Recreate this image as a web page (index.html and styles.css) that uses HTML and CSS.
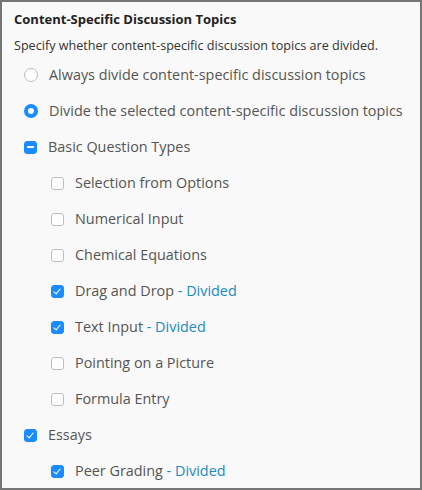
FILE: index.html
```html
<!DOCTYPE html>
<html>
<head>
<meta charset="utf-8">
<link rel="stylesheet" href="styles.css">
</head>
<body>
<div class="panel">
  <h3 class="title">Content-Specific Discussion Topics</h3>
  <p class="desc">Specify whether content-specific discussion topics are divided.</p>
  <ul class="list">
    <li class="row"><span class="radio"></span><span class="label">Always divide content-specific discussion topics</span></li>
    <li class="row"><span class="radio on"></span><span class="label">Divide the selected content-specific discussion topics</span></li>
    <li class="row"><span class="box mixed"></span><span class="label">Basic Question Types</span></li>
    <li class="row sub"><span class="box"></span><span class="label">Selection from Options</span></li>
    <li class="row sub"><span class="box"></span><span class="label">Numerical Input</span></li>
    <li class="row sub"><span class="box"></span><span class="label">Chemical Equations</span></li>
    <li class="row sub"><span class="box checked"></span><span class="label">Drag and Drop <span class="div">- Divided</span></span></li>
    <li class="row sub"><span class="box checked"></span><span class="label">Text Input <span class="div">- Divided</span></span></li>
    <li class="row sub"><span class="box"></span><span class="label">Pointing on a Picture</span></li>
    <li class="row sub"><span class="box"></span><span class="label">Formula Entry</span></li>
    <li class="row"><span class="box checked"></span><span class="label">Essays</span></li>
    <li class="row sub"><span class="box checked"></span><span class="label">Peer Grading <span class="div">- Divided</span></span></li>
  </ul>
</div>
</body>
</html>
```
FILE: styles.css
```css
html, body {
  margin: 0;
  padding: 0;
}
body {
  width: 422px;
  height: 490px;
  overflow: hidden;
  font-family: "Open Sans", "Noto Sans", sans-serif;
}
.panel {
  box-sizing: border-box;
  width: 422px;
  height: 490px;
  border: 2px solid #767676;
  background: #f9f9f9;
  padding: 8px 12px 0 12px;
  overflow: hidden;
}
.title {
  margin: 0;
  font-size: 13px;
  font-weight: 700;
  color: #222;
  line-height: 18px;
}
.desc {
  margin: 9px 0 0 0;
  font-size: 12.6px;
  color: #333;
  line-height: 18px;
  white-space: nowrap;
}
.list {
  list-style: none;
  margin: 2px 0 0 0;
  padding: 0;
}
.row {
  display: flex;
  align-items: center;
  height: 36px;
  padding-left: 10px;
  white-space: nowrap;
}
.row.sub {
  padding-left: 37px;
}
.label {
  font-size: 14.4px;
  color: #555;
  margin-left: 11px;
  line-height: 20px;
}
.div {
  color: #1a8ac6;
}
.radio {
  box-sizing: border-box;
  width: 14px;
  height: 14px;
  border-radius: 50%;
  border: 1px solid #bdbdbd;
  background: #fff;
  flex: none;
}
.radio.on {
  border: 4px solid #1a8cff;
  background: #fff;
}
.box {
  box-sizing: border-box;
  width: 13px;
  height: 13px;
  border-radius: 3px;
  border: 1px solid #bdbdbd;
  background: #fff;
  flex: none;
  position: relative;
}
.box.checked, .box.mixed {
  background: #1a8cff;
  border-color: #1a8cff;
}
.box.mixed::after {
  content: "";
  position: absolute;
  left: 2px;
  right: 2px;
  top: 4px;
  height: 2px;
  background: #fff;
}
.box.checked::after {
  content: "";
  position: absolute;
  left: 3px;
  top: 1px;
  width: 3px;
  height: 6px;
  border: solid #fff;
  border-width: 0 1.5px 1.5px 0;
  transform: rotate(40deg);
}
```
